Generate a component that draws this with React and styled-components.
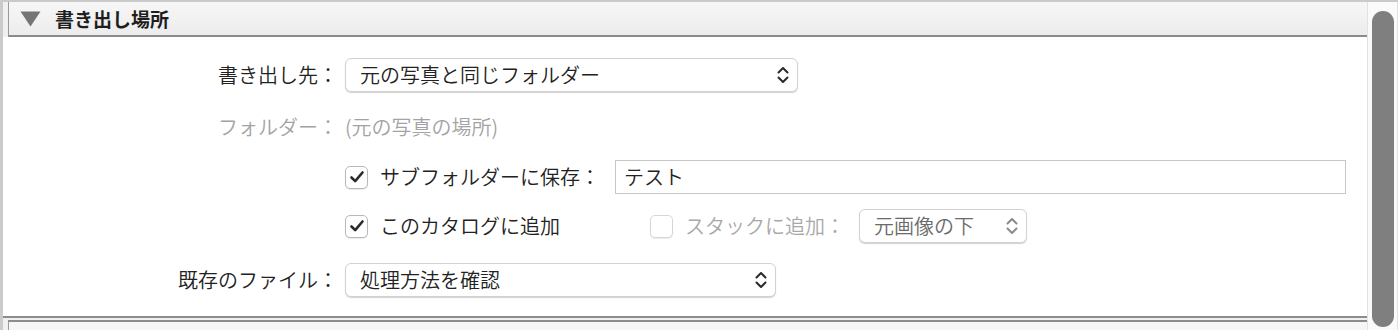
import React from "react";
import styled, { createGlobalStyle } from "styled-components";

const GlobalStyle = createGlobalStyle`
  html, body {
    margin: 0;
    padding: 0;
    overflow: hidden;
    background: #ffffff;
  }
  body {
    font-family: "Noto Sans CJK JP", "Noto Sans", sans-serif;
    font-weight: 350;
    color: #222222;
  }
  * {
    box-sizing: border-box;
  }
`;

const Window = styled.div`
  width: 1398px;
  height: 330px;
  display: flex;
  border-top: 2px solid #cacaca;
  background: #ffffff;
`;

const Main = styled.div`
  flex: 1;
  display: flex;
  flex-direction: column;
  border-left: 3px solid #cbcbcb;
  background: #f0f0f0;
`;

const Header = styled.div`
  height: 35px;
  margin-left: 5px;
  display: flex;
  align-items: center;
  gap: 14px;
  padding-left: 11px;
  border-left: 1px solid #9a9a9a;
  border-bottom: 2px solid #8b8b8b;
  background: linear-gradient(#f7f7f7, #ececec);
`;

const HeaderTitle = styled.span`
  font-size: 19px;
  font-weight: 700;
  color: #1e1e1e;
  line-height: 1;
`;

const Content = styled.div`
  flex: 1;
  background: #ffffff;
  padding-top: 21px;
`;

const Row = styled.div`
  display: grid;
  grid-template-columns: 335px 1fr;
  column-gap: 7px;
  align-items: center;
  height: 34px;
  margin-top: ${(p) => p.$mt || 0}px;
`;

const Label = styled.div`
  text-align: right;
  font-size: 20px;
  line-height: 1;
  white-space: nowrap;
  color: ${(p) => (p.$disabled ? "#a3a3a3" : "#222222")};
`;

const Value = styled.div`
  font-size: 20px;
  line-height: 1;
  color: #a3a3a3;
`;

const Select = styled.div`
  width: ${(p) => p.$width}px;
  height: 34px;
  display: flex;
  align-items: center;
  justify-content: space-between;
  padding: 0 7px 0 14px;
  border: 1px solid #d2d2d2;
  border-radius: 6px;
  background: #ffffff;
  box-shadow: 0 1px 1px rgba(0, 0, 0, 0.18);
  font-size: 20px;
  line-height: 1;
  color: ${(p) => (p.$muted ? "#6a6a6a" : "#222222")};
`;

const Options = styled.div`
  display: flex;
  align-items: center;
  height: 34px;
`;

const CheckGroup = styled.label`
  display: flex;
  align-items: center;
  gap: 12px;
  width: ${(p) => (p.$width ? `${p.$width}px` : "auto")};
  font-size: 20px;
  line-height: 1;
  white-space: nowrap;
  color: ${(p) => (p.$disabled ? "#a8a8a8" : "#222222")};
`;

const Box = styled.span`
  width: 23px;
  height: 23px;
  flex: none;
  display: flex;
  align-items: center;
  justify-content: center;
  border: 1px solid ${(p) => (p.$disabled ? "#d6d6d6" : "#b8b8b8")};
  border-radius: 5px;
  background: #ffffff;
  box-shadow: 0 1px 1px rgba(0, 0, 0, 0.08);
`;

const TextField = styled.div`
  flex: 1;
  height: 34px;
  margin-left: 15px;
  margin-right: 21px;
  display: flex;
  align-items: center;
  padding-left: 8px;
  border: 1px solid #c6c6c6;
  background: #ffffff;
  font-size: 20px;
  line-height: 1;
  color: #222222;
`;

const StackSelect = styled(Select)`
  margin-left: 14px;
`;

const Rule = styled.div`
  height: 2px;
  background: #8c8c8c;
  margin-bottom: 2px;
`;

const NextHeader = styled.div`
  height: 10px;
  margin-left: 5px;
  border-left: 1px solid #9a9a9a;
  border-top: 2px solid #8c8c8c;
  background: #f6f6f6;
`;

const Track = styled.div`
  width: 31px;
  flex: none;
  display: flex;
  justify-content: center;
  padding: 9px 0 3px;
  border-left: 1px solid #e2e2e2;
  border-right: 1px solid #e2e2e2;
  background: #fafafa;
`;

const Thumb = styled.div`
  width: 22px;
  border-radius: 11px;
  background: #7f7f7f;
`;

const Triangle = () => (
  <svg width="21" height="16" viewBox="0 0 21 16">
    <polygon points="0.5,0.5 20.5,0.5 10.5,15.5" fill="#757575" />
  </svg>
);

const Chevrons = ({ color = "#2a2a2a" }) => (
  <svg width="14" height="20" viewBox="0 0 14 20">
    <path
      d="M2.5 7.5 L7 3 L11.5 7.5 M2.5 12.5 L7 17 L11.5 12.5"
      fill="none"
      stroke={color}
      strokeWidth="2"
      strokeLinecap="round"
      strokeLinejoin="round"
    />
  </svg>
);

const Check = () => (
  <svg width="16" height="14" viewBox="0 0 16 14">
    <path
      d="M2.5 7.5 L6.2 11.2 L13.5 2.5"
      fill="none"
      stroke="#2b2b2b"
      strokeWidth="2.6"
      strokeLinecap="round"
      strokeLinejoin="round"
    />
  </svg>
);

const Checkbox = ({ checked, disabled }) => (
  <Box $disabled={disabled}>{checked && <Check />}</Box>
);

const App = () => {
  return (
    <React.Fragment>
      <GlobalStyle />
      <Window>
        <Main>
          <Header>
            <Triangle />
            <HeaderTitle>書き出し場所</HeaderTitle>
          </Header>
          <Content>
            <Row $mt={0}>
              <Label>書き出し先：</Label>
              <Select $width={453}>
                <span>元の写真と同じフォルダー</span>
                <Chevrons />
              </Select>
            </Row>
            <Row $mt={18}>
              <Label $disabled>フォルダー：</Label>
              <Value>(元の写真の場所)</Value>
            </Row>
            <Row $mt={16}>
              <div />
              <Options>
                <CheckGroup>
                  <Checkbox checked />
                  サブフォルダーに保存：
                </CheckGroup>
                <TextField>テスト</TextField>
              </Options>
            </Row>
            <Row $mt={15}>
              <div />
              <Options>
                <CheckGroup $width={305}>
                  <Checkbox checked />
                  このカタログに追加
                </CheckGroup>
                <CheckGroup $disabled>
                  <Checkbox disabled />
                  スタックに追加：
                </CheckGroup>
                <StackSelect $width={168} $muted>
                  <span>元画像の下</span>
                  <Chevrons color="#8a8a8a" />
                </StackSelect>
              </Options>
            </Row>
            <Row $mt={20}>
              <Label>既存のファイル：</Label>
              <Select $width={431}>
                <span>処理方法を確認</span>
                <Chevrons />
              </Select>
            </Row>
          </Content>
          <Rule />
          <NextHeader />
        </Main>
        <Track>
          <Thumb />
        </Track>
      </Window>
    </React.Fragment>
  );
};

export default App;
